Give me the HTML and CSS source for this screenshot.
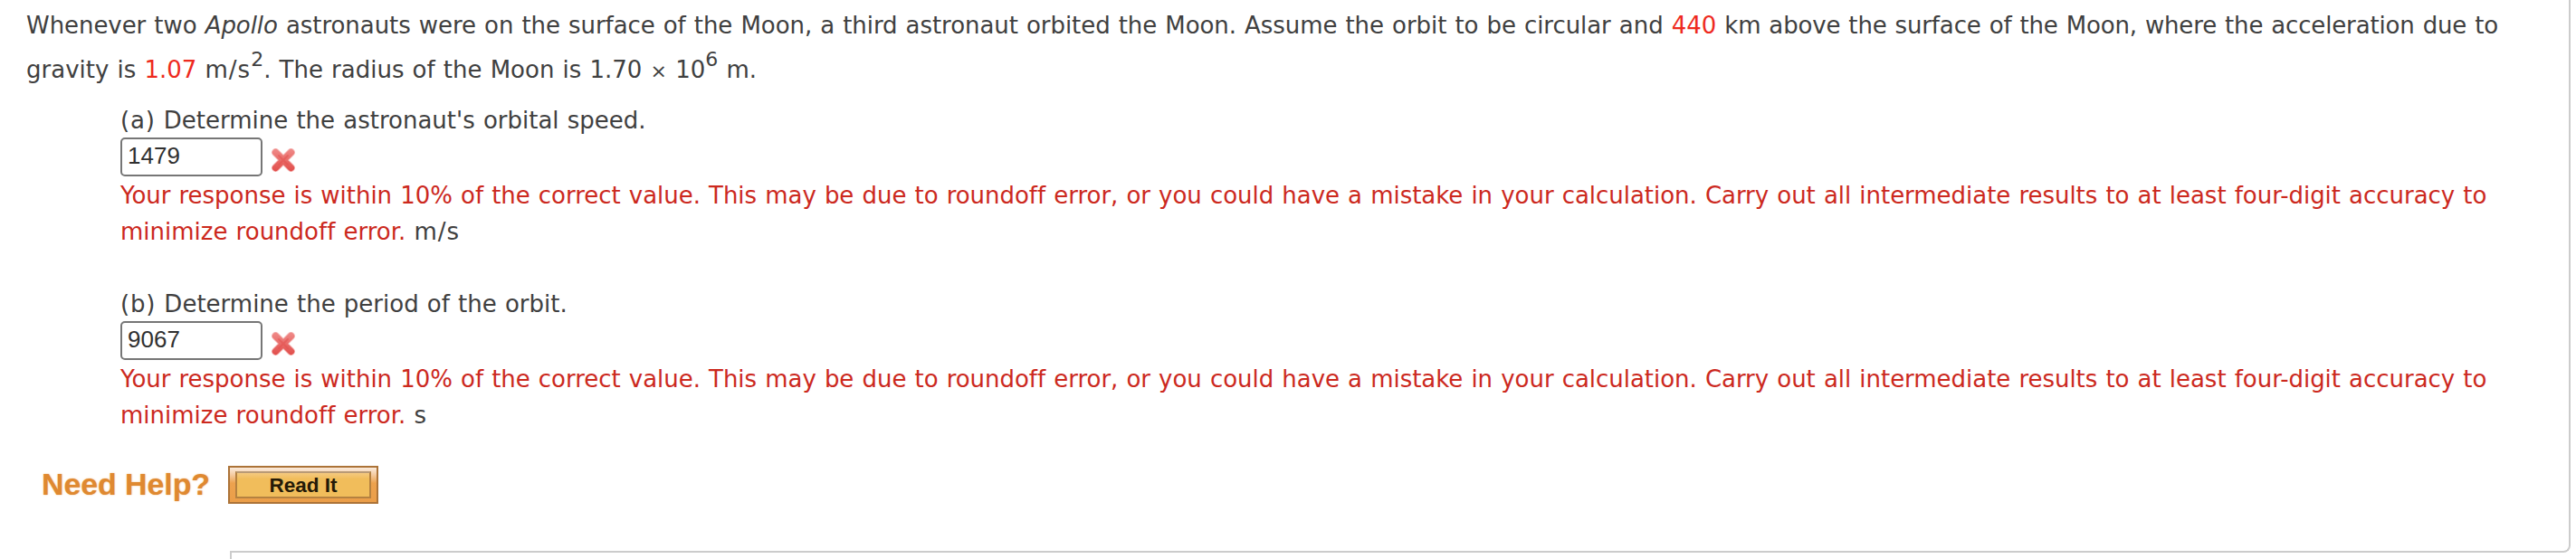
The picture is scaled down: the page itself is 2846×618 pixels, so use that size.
FILE: index.html
```
<!DOCTYPE html>
<html lang="en">
<head>
	<meta charset="utf-8">
	<title>Orbital Motion</title>
	<link rel="stylesheet" href="styles.css">
</head>

<body>
<div class="question">
	<div class="problem">
		<div class="line first"><span>Whenever two <i>Apollo</i> astronauts were on the surface of the Moon, a third astronaut orbited the Moon. Assume the orbit to be circular and <span class="random">440</span> <span class="tight">km above the surface of the Moon, where the acceleration due to</span></span></div>
		<div class="line second"><span>gravity is <span class="random">1.07</span> <span class="unit">m/s</span><sup>2</sup>. The radius of the Moon is 1.70 <span class="times">×</span> 10<sup>6</sup> m.</span></div>
	</div>

	<div class="part">
		<div class="line"><span><span class="letter">(a)</span> Determine the astronaut's orbital speed.</span></div>
		<div class="answer">
			<input class="response" type="text" value="1479">
			<svg class="wrong" width="30" height="30" viewBox="0 0 30 30">
				<defs>
					<linearGradient id="red" gradientUnits="userSpaceOnUse" x1="0" y1="2" x2="0" y2="28">
						<stop offset="0" stop-color="#f08c8a"/>
						<stop offset="1" stop-color="#e14c49"/>
					</linearGradient>
				</defs>
				<path d="M6.5 6.5L23.5 23.5M23.5 6.5L6.5 23.5" stroke="#f7c3c2" stroke-width="9" stroke-linecap="round"/>
				<path d="M6.5 6.5L23.5 23.5M23.5 6.5L6.5 23.5" stroke="url(#red)" stroke-width="7.4" stroke-linecap="round"/>
				<path d="M10 10L20 20M20 10L10 20" stroke="#e5504d" stroke-width="2" stroke-linecap="round" opacity=".5"/>
			</svg>
		</div>
		<div class="line hint wide"><span>Your response is within 10% of the correct value. This may be due to roundoff error, or you could have a mistake in your calculation. Carry out all intermediate results to at least four-digit accuracy to</span></div>
		<div class="line hint"><span>minimize roundoff error. <span class="unit">m/s</span></span></div>
	</div>

	<div class="part">
		<div class="line"><span><span class="letter">(b)</span> Determine the period of the orbit.</span></div>
		<div class="answer">
			<input class="response" type="text" value="9067">
			<svg class="wrong" width="30" height="30" viewBox="0 0 30 30">
				<path d="M6.5 6.5L23.5 23.5M23.5 6.5L6.5 23.5" stroke="#f7c3c2" stroke-width="9" stroke-linecap="round"/>
				<path d="M6.5 6.5L23.5 23.5M23.5 6.5L6.5 23.5" stroke="url(#red)" stroke-width="7.4" stroke-linecap="round"/>
				<path d="M10 10L20 20M20 10L10 20" stroke="#e5504d" stroke-width="2" stroke-linecap="round" opacity=".5"/>
			</svg>
		</div>
		<div class="line hint wide"><span>Your response is within 10% of the correct value. This may be due to roundoff error, or you could have a mistake in your calculation. Carry out all intermediate results to at least four-digit accuracy to</span></div>
		<div class="line hint"><span>minimize roundoff error. <span class="unit">s</span></span></div>
	</div>

	<div class="help">
		<span class="help-label">Need Help?</span>
		<a class="read-it"><span>Read It</span></a>
	</div>
</div>
<div class="question-end"></div>
<div class="next-box"></div>
</body>
</html>
```

FILE: styles.css
```
body {
	margin: 0;
	height: 618px;
	overflow: hidden;
	background-color: #fff;
	color: #404040;
	font-family: Verdana, "DejaVu Sans", sans-serif;
	font-size: 26px;
	font-variant-ligatures: none;
}

.question {
	box-sizing: border-box;
	width: 2840px;
	height: 601px;
	padding: 8px 0 0 29px;
	border-right: solid 2px #ccc;
}

/* bottom edge of the question, rounded into the right border */
.question-end {
	box-sizing: border-box;
	width: 2586px;
	height: 10px;
	margin-left: 254px;
	border-right: solid 2px #ccc;
	border-bottom: solid 2px #ccc;
	border-bottom-right-radius: 8px;
}

.next-box {
	height: 7px;
	margin-left: 254px;
	border-left: solid 2px #ccc;
}

.line {
	height: 40px;
	line-height: 40px;
	white-space: nowrap;
	word-spacing: 0.9px;
}

.problem {
	height: 105px;
}

.problem .first {
	letter-spacing: -0.06px;
}

.problem .tight {
	letter-spacing: -0.15px;
}

.problem .second {
	margin-top: 9px;
}

.random {
	color: #ee2a1e;
}

.times {
	font-size: 22px;
}

sup {
	font-size: 22px;
	line-height: 0;
	vertical-align: 13px;
}

.part {
	height: 203px;
	padding-left: 104px;
}

.letter {
	letter-spacing: 0.8px;
}

.answer {
	display: flex;
	height: 44px;
	margin: -1px 0 0;
}

.response {
	box-sizing: border-box;
	width: 157px;
	height: 43px;
	margin: 0;
	padding: 0 6px 2px;
	border: solid 2px #767676;
	border-radius: 5px;
	background-color: #fff;
	color: #303030;
	font-family: Arial, "Liberation Sans", sans-serif;
	font-size: 26px;
}

.wrong {
	margin: 10px 0 0 8px;
}

.hint {
	color: #cc291e;
}

.wide {
	letter-spacing: -0.03px;
}

.unit {
	color: #404040;
	letter-spacing: 1px;
}

.help {
	display: flex;
	align-items: flex-start;
	margin-top: -4px;
	padding-left: 17px;
	font-family: Arial, "Liberation Sans", sans-serif;
	font-weight: bold;
}

.help-label {
	width: 206px;
	color: #df8931;
	font-size: 34px;
	line-height: 40px;
	letter-spacing: -0.1px;
	white-space: nowrap;
	text-shadow: 0 0 2px #f0bd88;
}

.read-it {
	box-sizing: border-box;
	width: 166px;
	height: 42px;
	padding: 4px 6px;
	border: solid 2px #ac7338;
	background: linear-gradient(#fbebdc, #f5cda4 20%, #eda24e 45%, #eb9e49);
}

.read-it span {
	display: block;
	box-sizing: border-box;
	height: 30px;
	border: solid 2px #b58140;
	border-top-color: #b99a75;
	background: linear-gradient(#f4c980, #f1bd5b 25%);
	color: #241a08;
	font-size: 22.5px;
	line-height: 28px;
	text-align: center;
}
```
